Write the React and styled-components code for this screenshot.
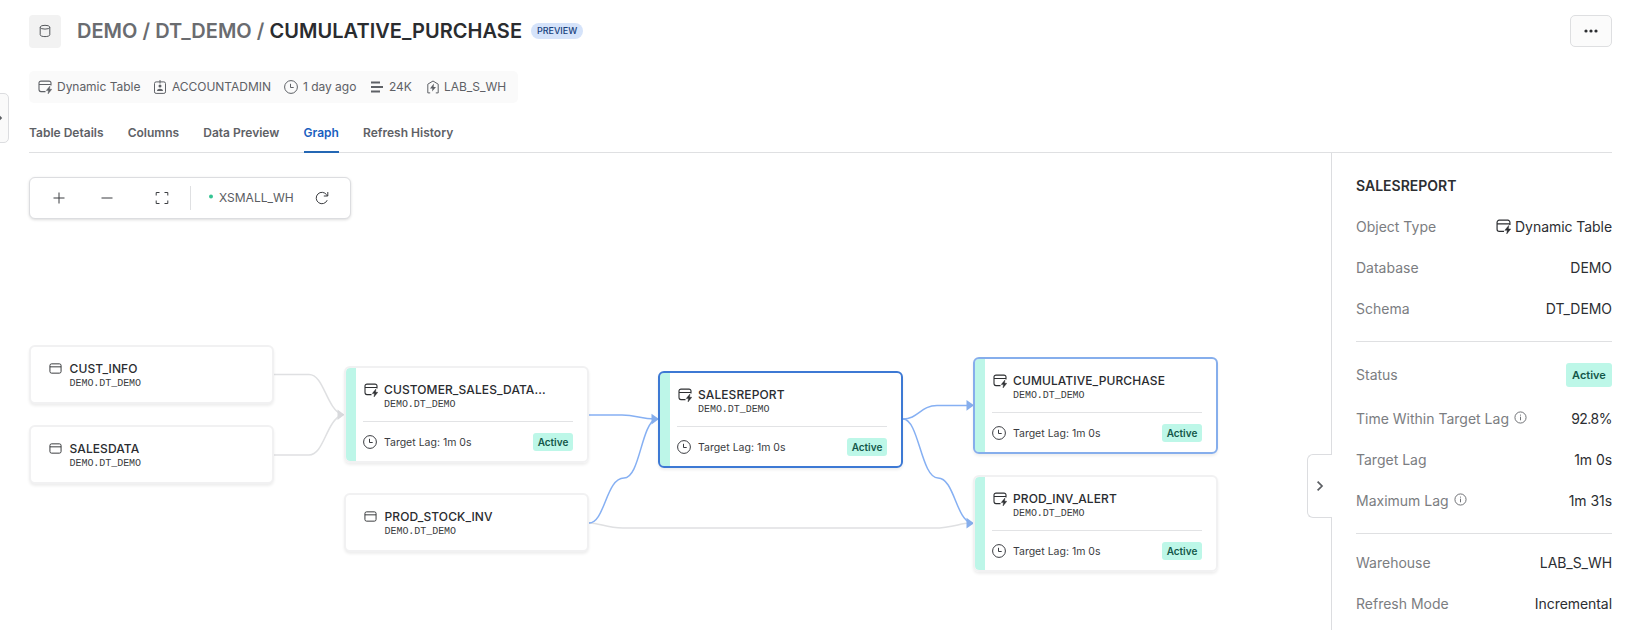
import React from "react";
import styled, { createGlobalStyle } from "styled-components";

const GlobalStyle = createGlobalStyle`
  * { box-sizing: border-box; }
  html, body { margin: 0; background: #fff; }
  body { font-family: Inter, "Liberation Sans", sans-serif; color: #2c2e31; overflow: hidden; }
`;

const Page = styled.div`
  position: relative;
  width: 1635px;
  height: 630px;
  overflow: hidden;
  display: flex;
  flex-direction: column;
  padding: 15px 23px 0 29px;
`;

const Header = styled.header`
  display: flex;
  align-items: center;
  height: 32px;
`;
const ObjectIcon = styled.div`
  width: 32px;
  height: 33px;
  border-radius: 4px;
  background: #f2f2f2;
  display: grid;
  place-items: center;
  color: #55585c;
`;
const Title = styled.h1`
  margin: 0 0 0 16px;
  font-size: 20px;
  line-height: 32px;
  font-weight: 600;
  color: #6a6c70;
  white-space: nowrap;
  letter-spacing: 0.03px;
  strong { font-weight: 600; color: #2a2c2f; }
`;
const PreviewBadge = styled.span`
  margin-left: 9px;
  width: 52px;
  height: 16px;
  border-radius: 8px;
  background: #d5e3fa;
  color: #173f7d;
  font-size: 9px;
  line-height: 16px;
  font-weight: 500;
  text-align: center;
`;
const MoreButton = styled.button`
  margin-left: auto;
  width: 42px;
  height: 32px;
  padding: 0;
  display: grid;
  place-items: center;
  border: 1px solid #dedfe1;
  border-radius: 5px;
  background: #fbfbfb;
  color: #2c2e31;
`;

const MetaBar = styled.div`
  display: flex;
  align-items: center;
  align-self: flex-start;
  width: 489px;
  height: 32px;
  margin-top: 24px;
  padding: 0 0 1px 9px;
  border-radius: 5px;
  background: #fafafa;
  font-size: 12px;
  color: #5e6166;
`;
const MetaItem = styled.div`
  display: flex;
  align-items: center;
  gap: ${(p) => p.$gap || 5}px;
  width: ${(p) => p.$w}px;
  white-space: nowrap;
  letter-spacing: -0.03px;
  svg { flex: none; }
`;

const Tabs = styled.nav`
  display: flex;
  gap: 24.2px;
  height: 50px;
  border-bottom: 1px solid #dfe0e2;
  flex: none;
`;
const Tab = styled.a`
  height: 50px;
  padding-top: 20px;
  font-size: 12px;
  line-height: 20px;
  font-weight: 600;
  white-space: nowrap;
  color: ${(p) => (p.$active ? "#1a5fc0" : "#5e6166")};
  border-bottom: 2px solid ${(p) => (p.$active ? "#2467b4" : "transparent")};
`;

const Body = styled.main`
  display: flex;
  flex: 1;
  min-height: 0;
`;
const Canvas = styled.section`
  position: relative;
  width: 1302px;
  flex: none;
  padding-top: 24px;
`;
const Toolbar = styled.div`
  display: flex;
  align-items: center;
  width: 322px;
  height: 42px;
  padding-bottom: 1px;
  border: 1px solid #dcdde0;
  border-radius: 6px;
  box-shadow: 0 1px 3px rgba(0, 0, 0, 0.14);
  background: #fff;
  color: #3b3d41;
`;
const ToolButton = styled.button`
  width: ${(p) => p.$w}px;
  height: 39px;
  padding: 0;
  border: 0;
  background: none;
  color: inherit;
  display: grid;
  place-items: center;
`;
const ToolDivider = styled.span`
  width: 1px;
  height: 24px;
  margin-left: -8px;
  background: #dfe0e2;
`;
const Warehouse = styled.span`
  display: flex;
  align-items: center;
  gap: 6px;
  margin-left: 18px;
  width: 94px;
  font-size: 12px;
  color: #5a5d62;
  &::before {
    content: "";
    width: 4px;
    height: 4px;
    border-radius: 50%;
    background: #35c493;
    transform: translateY(-1.5px);
  }
`;

const Edges = styled.svg`
  position: absolute;
  inset: 0;
  width: 1302px;
  height: 477px;
  pointer-events: none;
`;

const borders = { plain: "#f1f1f2", selected: "#3d79d4", related: "#86aeec" };
const Node = styled.article`
  position: absolute;
  left: ${(p) => p.$x}px;
  top: ${(p) => p.$y}px;
  width: 245px;
  height: ${(p) => (p.$lag ? 97 : 59)}px;
  border: 2px solid ${(p) => borders[p.$tone]};
  border-radius: 6px;
  background: ${(p) => (p.$lag ? "linear-gradient(90deg, #bdf6e8 10px, #fff 10px)" : "#fff")};
  background-origin: padding-box;
  background-clip: padding-box;
  box-shadow: 0 2px 3px rgba(0, 0, 0, 0.07);
  padding: ${(p) => (p.$lag ? "13px 14px 0 17px" : "13px 13px 0 17.5px")};
`;
const NodeHead = styled.div`
  display: grid;
  grid-template-columns: 13px 1fr;
  column-gap: 8px;
  align-items: start;
  height: 41px;
  border-bottom: ${(p) => (p.$lag ? "1px solid #e2e3e5" : "0")};
  svg { margin: ${(p) => (p.$lag ? "2px 0 0 1px" : "1.5px 0 0 0")}; }
`;
const NodeName = styled.div`
  font-size: 12px;
  line-height: 17px;
  font-weight: 500;
  letter-spacing: 0.1px;
  color: #2a2c30;
  white-space: nowrap;
`;
const NodePath = styled.div`
  font-family: "Liberation Mono", monospace;
  font-size: 10px;
  line-height: 13px;
  letter-spacing: -0.04px;
  color: #3a3c40;
`;
const NodeLag = styled.div`
  display: flex;
  align-items: center;
  height: 40px;
  font-size: 10.5px;
  color: #3a3c41;
  svg { margin-right: 7px; }
`;
const Status = styled.span`
  margin-left: auto;
  display: grid;
  place-items: center;
  width: ${(p) => (p.$large ? 46 : 40)}px;
  height: ${(p) => (p.$large ? 24 : 18)}px;
  border-radius: 3px;
  background: #bdf7e8;
  color: #14574a;
  font-size: ${(p) => (p.$large ? 11 : 10)}px;
  font-weight: 600;
`;

const CollapseHandle = styled.button`
  position: absolute;
  left: 1278px;
  top: 301px;
  width: 25px;
  height: 64px;
  padding: 0;
  border: 1px solid #dcdde0;
  border-right: 0;
  border-radius: 6px 0 0 6px;
  background: #fff;
  display: grid;
  place-items: center;
  color: #5b5e63;
`;
const NavHandle = styled.button`
  position: absolute;
  left: -16px;
  top: 93px;
  width: 25px;
  height: 50px;
  border: 1px solid #dcdde0;
  border-radius: 5px;
  background: #fafafa;
  padding: 0;
  color: #5b5e63;
  svg { display: block; margin: 0 0 0 10px; }
`;

const Panel = styled.aside`
  flex: 1;
  border-left: 1px solid #dcdde0;
  padding: 23px 0 0 24px;
  font-size: 14px;
`;
const PanelTitle = styled.h2`
  margin: 0 0 10px;
  font-size: 14px;
  line-height: 20px;
  font-weight: 600;
`;
const Group = styled.div`
  padding: ${(p) => p.$pad || "0"};
  border-top: ${(p) => (p.$line ? "1px solid #dfe0e2" : "0")};
`;
const Row = styled.div`
  display: flex;
  align-items: center;
  justify-content: space-between;
  height: ${(p) => p.$h || 41}px;
`;
const Label = styled.span`
  display: flex;
  align-items: center;
  gap: 5px;
  color: #7b7d81;
  svg { color: #66686c; margin-bottom: 2px; }
`;
const Value = styled.span`
  display: flex;
  align-items: center;
  gap: 4px;
  color: #2c2e32;
  letter-spacing: ${(p) => (p.$tight ? "-0.5px" : "-0.06px")};
`;

const Svg = ({ size = 14, children, width = 1 }) => (
  <svg width={size} height={size} viewBox="0 0 14 14" fill="none" stroke="currentColor" strokeWidth={width}>
    {children}
  </svg>
);
const DynamicIcon = ({ size }) => (
  <Svg size={size} width={1.1}>
    <path d="M7.5 11.6H3A2 2 0 0 1 1 9.6V3.1A2 2 0 0 1 3 1.1H11A2 2 0 0 1 13 3.1V5.6M1 4.5H13" />
    <path d="M11.9 6 8.2 10.6H10.5L10 14 13.8 9.3H11.6Z" fill="currentColor" strokeWidth="0.4" />
  </Svg>
);
const TableIcon = () => (
  <Svg size={13}>
    <rect x="1" y="2" width="12" height="10" rx="1.8" />
    <path d="M1 5.2H13" />
  </Svg>
);
const ClockIcon = ({ size = 14 }) => (
  <Svg size={size}>
    <circle cx="7" cy="7" r="6.4" />
    <path d="M6.5 3.8V7.5H9.7" />
  </Svg>
);
const RoleIcon = () => (
  <Svg size={14}>
    <rect x="1.5" y="1.9" width="11" height="11.5" rx="1.6" />
    <path d="M7 0V3.5" />
    <circle cx="7" cy="6" r="1.5" fill="currentColor" stroke="none" />
    <path d="M4 11C4 7.9 10 7.9 10 11Z" fill="currentColor" stroke="none" />
  </Svg>
);
const RowsIcon = () => (
  <Svg size={14} width={1.8}>
    <path d="M1 2.5H10M1 7H13M1 11.5H10" />
  </Svg>
);
const WarehouseIcon = () => (
  <Svg size={14}>
    <path d="M4.2 12.9H1.8V4.2L7 1 12.2 4.2V12.9H9.8" />
    <path d="M7.9 3.6 4 8.4H6.4L6.1 11.6 10 6.9H7.6Z" fill="currentColor" stroke="none" />
  </Svg>
);
const InfoIcon = () => (
  <Svg size={13}>
    <circle cx="7" cy="7" r="6" />
    <path d="M7 6.1V10M7 3.9V5" />
  </Svg>
);
const Chevron = () => (
  <svg width="8" height="12" viewBox="0 0 8 12" fill="none" stroke="currentColor" strokeWidth="1.7">
    <path d="M1.6 1.6 6 6 1.6 10.4" />
  </svg>
);

const nodes = [
  { name: "CUST_INFO", x: 0, y: 192, tone: "plain" },
  { name: "SALESDATA", x: 0, y: 272, tone: "plain" },
  { name: "CUSTOMER_SALES_DATA...", x: 315, y: 213.4, tone: "plain", lag: true },
  { name: "PROD_STOCK_INV", x: 315, y: 340.4, tone: "plain" },
  { name: "SALESREPORT", x: 629, y: 218, tone: "selected", lag: true },
  { name: "CUMULATIVE_PURCHASE", x: 944, y: 204, tone: "related", lag: true },
  { name: "PROD_INV_ALERT", x: 944, y: 322, tone: "plain", lag: true },
];

const GraphNode = ({ name, x, y, tone, lag }) => (
  <Node $x={x} $y={y} $tone={tone} $lag={lag}>
    <NodeHead $lag={lag}>
      {lag ? <DynamicIcon size={14} /> : <TableIcon />}
      <div>
        <NodeName>{name}</NodeName>
        <NodePath>DEMO.DT_DEMO</NodePath>
      </div>
    </NodeHead>
    {lag && (
      <NodeLag>
        <ClockIcon />
        Target Lag: 1m 0s
        <Status>Active</Status>
      </NodeLag>
    )}
  </Node>
);

export default function App() {
  return (
    <Page>
      <GlobalStyle />
      <NavHandle aria-label="Expand navigation"><Chevron /></NavHandle>
      <Header>
        <ObjectIcon>
          <Svg size={14}>
            <ellipse cx="7" cy="3.2" rx="4.8" ry="1.9" />
            <path d="M2.2 3.2V10.8C2.2 13.2 11.8 13.2 11.8 10.8V3.2" />
          </Svg>
        </ObjectIcon>
        <Title>DEMO / DT_DEMO / <strong>CUMULATIVE_PURCHASE</strong></Title>
        <PreviewBadge>PREVIEW</PreviewBadge>
        <MoreButton aria-label="More">
          <svg width="16" height="4" viewBox="0 0 16 4" fill="currentColor">
            <circle cx="3" cy="2" r="1.6" /><circle cx="8" cy="2" r="1.6" /><circle cx="13" cy="2" r="1.6" />
          </svg>
        </MoreButton>
      </Header>
      <MetaBar>
        <MetaItem $w={115}><DynamicIcon />Dynamic Table</MetaItem>
        <MetaItem $w={131}><RoleIcon />ACCOUNTADMIN</MetaItem>
        <MetaItem $w={86}><ClockIcon />1 day ago</MetaItem>
        <MetaItem $w={56}><RowsIcon />24K</MetaItem>
        <MetaItem $w={90} $gap={4}><WarehouseIcon />LAB_S_WH</MetaItem>
      </MetaBar>
      <Tabs>
        <Tab>Table Details</Tab>
        <Tab>Columns</Tab>
        <Tab>Data Preview</Tab>
        <Tab $active>Graph</Tab>
        <Tab>Refresh History</Tab>
      </Tabs>
      <Body>
        <Canvas>
          <Toolbar>
            <ToolButton $w={57} aria-label="Zoom in">
              <Svg size={14}><path d="M7 1.5V12.5M1.5 7H12.5" /></Svg>
            </ToolButton>
            <ToolButton $w={39} aria-label="Zoom out">
              <Svg size={14}><path d="M1.5 7H12.5" /></Svg>
            </ToolButton>
            <ToolButton $w={72} aria-label="Fit to screen">
              <Svg size={14}><path d="M1.2 4.5V1.5H4.5M9.5 1.5H12.8V4.5M12.8 9.5V12.5H9.5M4.5 12.5H1.2V9.5" /></Svg>
            </ToolButton>
            <ToolDivider />
            <Warehouse>XSMALL_WH</Warehouse>
            <ToolButton $w={37} aria-label="Refresh">
              <Svg size={14}><path d="M12.2 9.2A5.7 5.7 0 1 1 11.7 3.9L12.6 5M12.8 1V5H8.8" /></Svg>
            </ToolButton>
          </Toolbar>
          <Edges viewBox="29 153 1302 477" fill="none" strokeWidth="1.5">
            <g stroke="#dfe0e2">
              <path d="M274 374.5H309C324 374.5 326 408 342 414.7" />
              <path d="M274 455H309C324 455 326 421 342 414.7" />
              <path d="M589 523C600 523 606 528 623 528H934C953 528 960 523 970 523" />
            </g>
            <path d="M337.5 409.5 344.5 414.7 337.5 420Z" fill="#d8d9dc" />
            <g stroke="#86b0f3">
              <path d="M589 415H622C636 415 640 418.5 655 419" />
              <path d="M589 523C605 523 606 478 624 478C640 478 641 424 656 419" />
              <path d="M903 419C918 419 921 405.5 937 405.5H970" />
              <path d="M903 419C919 419 921 478 938 478C954 478 956 519 971 523" />
            </g>
            <g fill="#86aeec">
              <path d="M651.5 413.8 659 419 651.5 424.4Z" />
              <path d="M966.5 400 974 405.3 966.5 410.7Z" />
              <path d="M966.5 517.8 974 523.2 966.5 528.6Z" />
            </g>
          </Edges>
          {nodes.map((n) => <GraphNode key={n.name} {...n} />)}
          <CollapseHandle aria-label="Collapse details"><Chevron /></CollapseHandle>
        </Canvas>
        <Panel>
          <PanelTitle>SALESREPORT</PanelTitle>
          <Group $pad="0 0 12px">
            <Row><Label>Object Type</Label><Value><DynamicIcon size={15} />Dynamic Table</Value></Row>
            <Row><Label>Database</Label><Value>DEMO</Value></Row>
            <Row><Label>Schema</Label><Value>DT_DEMO</Value></Row>
          </Group>
          <Group $line $pad="9px 0 12px">
            <Row $h={47}><Label>Status</Label><Status $large>Active</Status></Row>
            <Row><Label>Time Within Target Lag <InfoIcon /></Label><Value $tight>92.8%</Value></Row>
            <Row><Label>Target Lag</Label><Value>1m 0s</Value></Row>
            <Row><Label>Maximum Lag <InfoIcon /></Label><Value>1m 31s</Value></Row>
          </Group>
          <Group $line $pad="8px 0 0">
            <Row><Label>Warehouse</Label><Value>LAB_S_WH</Value></Row>
            <Row><Label>Refresh Mode</Label><Value>Incremental</Value></Row>
          </Group>
        </Panel>
      </Body>
    </Page>
  );
}
